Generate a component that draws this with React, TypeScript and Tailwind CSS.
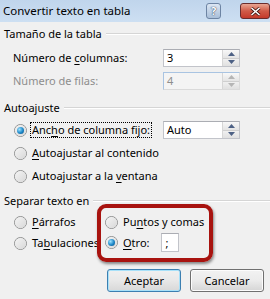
import React from "react";

const font = { fontFamily: '"Noto Sans", "Open Sans", sans-serif' };

function U({ children }: { children: React.ReactNode }) {
  return <span className="underline underline-offset-[2px]">{children}</span>;
}

function Header({ label }: { label: string }) {
  return (
    <div className="flex items-center h-[16px] pl-[4px] gap-[4px]">
      <span className="whitespace-nowrap">{label}</span>
      <div className="flex-1 h-[2px] border-t border-[#d5d5d5] border-b border-b-white" />
    </div>
  );
}

function Spin({ value, disabled }: { value: string; disabled?: boolean }) {
  return (
    <div
      className={
        "flex w-[77px] h-[18px] border " +
        (disabled
          ? "bg-[#f4f4f4] border-[#dadada] border-t-[#a9c4e2] border-l-[#a9c4e2] text-[#8d8d8d]"
          : "bg-white border-[#c2c4ca] border-t-[#abadb3] text-black")
      }
    >
      <div className="flex-1 pl-[3px] leading-[16px]">{value}</div>
      <div className="w-[17px] flex flex-col border-l border-[#d6d6d6]">
        <div className="flex-1 flex items-center justify-center bg-gradient-to-b from-[#f8f8f8] to-[#e4e4e4] border-b border-[#cfcfcf]">
          <svg width="7" height="4" viewBox="0 0 7 4">
            <path d="M0 4 L3.5 0 L7 4 Z" fill={disabled ? "#b5b5b5" : "#4d6185"} />
          </svg>
        </div>
        <div className="flex-1 flex items-center justify-center bg-gradient-to-b from-[#f0f0f0] to-[#e0e0e0]">
          <svg width="7" height="4" viewBox="0 0 7 4">
            <path d="M0 0 L7 0 L3.5 4 Z" fill={disabled ? "#b5b5b5" : "#4d6185"} />
          </svg>
        </div>
      </div>
    </div>
  );
}

function Radio({ checked }: { checked?: boolean }) {
  return (
    <span className="w-[13px] h-[13px] rounded-full border border-[#8e8f8f] bg-gradient-to-br from-[#dcdcdc] to-[#fafafa] flex items-center justify-center shrink-0">
      <span className="w-[11px] h-[11px] rounded-full bg-gradient-to-br from-[#f4f4f4] to-[#d8d8d8] flex items-center justify-center">
        {checked && (
          <span className="w-[7px] h-[7px] rounded-full bg-[radial-gradient(circle_at_35%_35%,#9fe3ff,#1b86c7_55%,#0b4b7e)]" />
        )}
      </span>
    </span>
  );
}

function RadioRow({ checked, children, focus }: { checked?: boolean; children: React.ReactNode; focus?: boolean }) {
  return (
    <div className="flex items-center h-[16px] gap-[4px] whitespace-nowrap">
      <Radio checked={checked} />
      <span className={"leading-[14px] px-[1px] " + (focus ? "outline outline-1 outline-dotted outline-black" : "")}>
        {children}
      </span>
    </div>
  );
}

function Btn({ label, focus }: { label: string; focus?: boolean }) {
  return (
    <div
      className={
        "w-[74px] h-[23px] rounded-[3px] border flex items-center justify-center bg-gradient-to-b " +
        (focus
          ? "border-[#3c7fb1] from-[#f0f0f0] via-[#e8e8e8] to-[#d8d8d8] shadow-[inset_0_0_0_1px_#a8e1f9]"
          : "border-[#707070] from-[#f2f2f2] via-[#ebebeb] to-[#d5d5d5] shadow-[inset_0_0_0_1px_#fcfcfc]")
      }
    >
      {label}
    </div>
  );
}

export default function App() {
  return (
    <div className="w-[270px] h-[299px] bg-[#f0f0f0] text-[11px] leading-[16px] text-black overflow-hidden" style={font}>
      {/* title bar */}
      <div className="h-[22px] flex items-center justify-between pl-[3px] pr-0 bg-gradient-to-b from-[#c0d5ec] to-[#cddff2]">
        <span className="text-[11.5px] text-black leading-none">Convertir texto en tabla</span>
        <div className="flex items-center gap-[19px] self-start mt-[3px]">
          <div className="w-[15px] h-[16px] rounded-[3px] border border-[#6d84a3] bg-gradient-to-b from-[#dbe6f3] to-[#a9bfd9] flex items-center justify-center text-[11px] font-bold text-white [text-shadow:0_0_1px_#2d3f5a,0_0_1px_#2d3f5a]">
            ?
          </div>
          <div className="w-[30px] h-[16px] rounded-[3px] border border-[#6a2c2c] bg-gradient-to-b from-[#e8a593] via-[#d05a47] to-[#c4392a] flex items-center justify-center">
            <svg width="11" height="9" viewBox="0 0 11 9">
              <path d="M1.5 1 L9.5 8 M9.5 1 L1.5 8" stroke="#3d1410" strokeWidth="3" />
              <path d="M1.5 1 L9.5 8 M9.5 1 L1.5 8" stroke="#ffffff" strokeWidth="1.6" />
            </svg>
          </div>
        </div>
      </div>

      <div className="flex flex-col">
        <div className="mt-[4px]">
          <Header label="Tamaño de la tabla" />
        </div>
        <div className="mt-[7px] flex items-center pl-[13px]">
          <span className="w-[150px]">
            Número de <U>c</U>olumnas:
          </span>
          <Spin value="3" />
        </div>
        <div className="mt-[5px] flex items-center pl-[13px]">
          <span className="w-[150px] text-[#8d8d8d]">Número de filas:</span>
          <Spin value="4" disabled />
        </div>

        <div className="mt-[10px]">
          <Header label="Autoajuste" />
        </div>
        <div className="mt-[5px] flex items-center pl-[14px]">
          <div className="w-[149px]">
            <RadioRow checked focus>
              Anc<U>h</U>o de columna fijo:
            </RadioRow>
          </div>
          <Spin value="Auto" />
        </div>
        <div className="mt-[6px] pl-[14px]">
          <RadioRow>
            <U>A</U>utoajustar al contenido
          </RadioRow>
        </div>
        <div className="mt-[7px] pl-[14px]">
          <RadioRow>
            Autoajustar a la <U>v</U>entana
          </RadioRow>
        </div>

        <div className="mt-[9px]">
          <Header label="Separar texto en" />
        </div>
        <div className="flex mt-[-5px]">
          <div className="w-[97px] pl-[14px] pt-[10px] flex flex-col gap-[5px]">
            <RadioRow>
              <U>P</U>árrafos
            </RadioRow>
            <RadioRow>
              Ta<U>b</U>ulaciones
            </RadioRow>
          </div>
          <div className="w-[116px] h-[58px] rounded-[9px] border-[4px] border-[#a8130f] shadow-[1px_2px_3px_rgba(0,0,0,0.45)] pl-[4px] pt-[6px] flex flex-col gap-[3px]">
            <RadioRow>
              Pu<U>n</U>tos y comas
            </RadioRow>
            <div className="flex items-center gap-[10px]">
              <RadioRow checked>
                <U>O</U>tro:
              </RadioRow>
              <div className="w-[18px] h-[19px] bg-white border border-[#c2c4ca] border-t-[#abadb3] pl-[4px] leading-[17px]">;</div>
            </div>
          </div>
        </div>

        <div className="flex justify-end gap-[9px] pr-[6px] mt-[7px]">
          <Btn label="Aceptar" focus />
          <Btn label="Cancelar" />
        </div>
      </div>
    </div>
  );
}
